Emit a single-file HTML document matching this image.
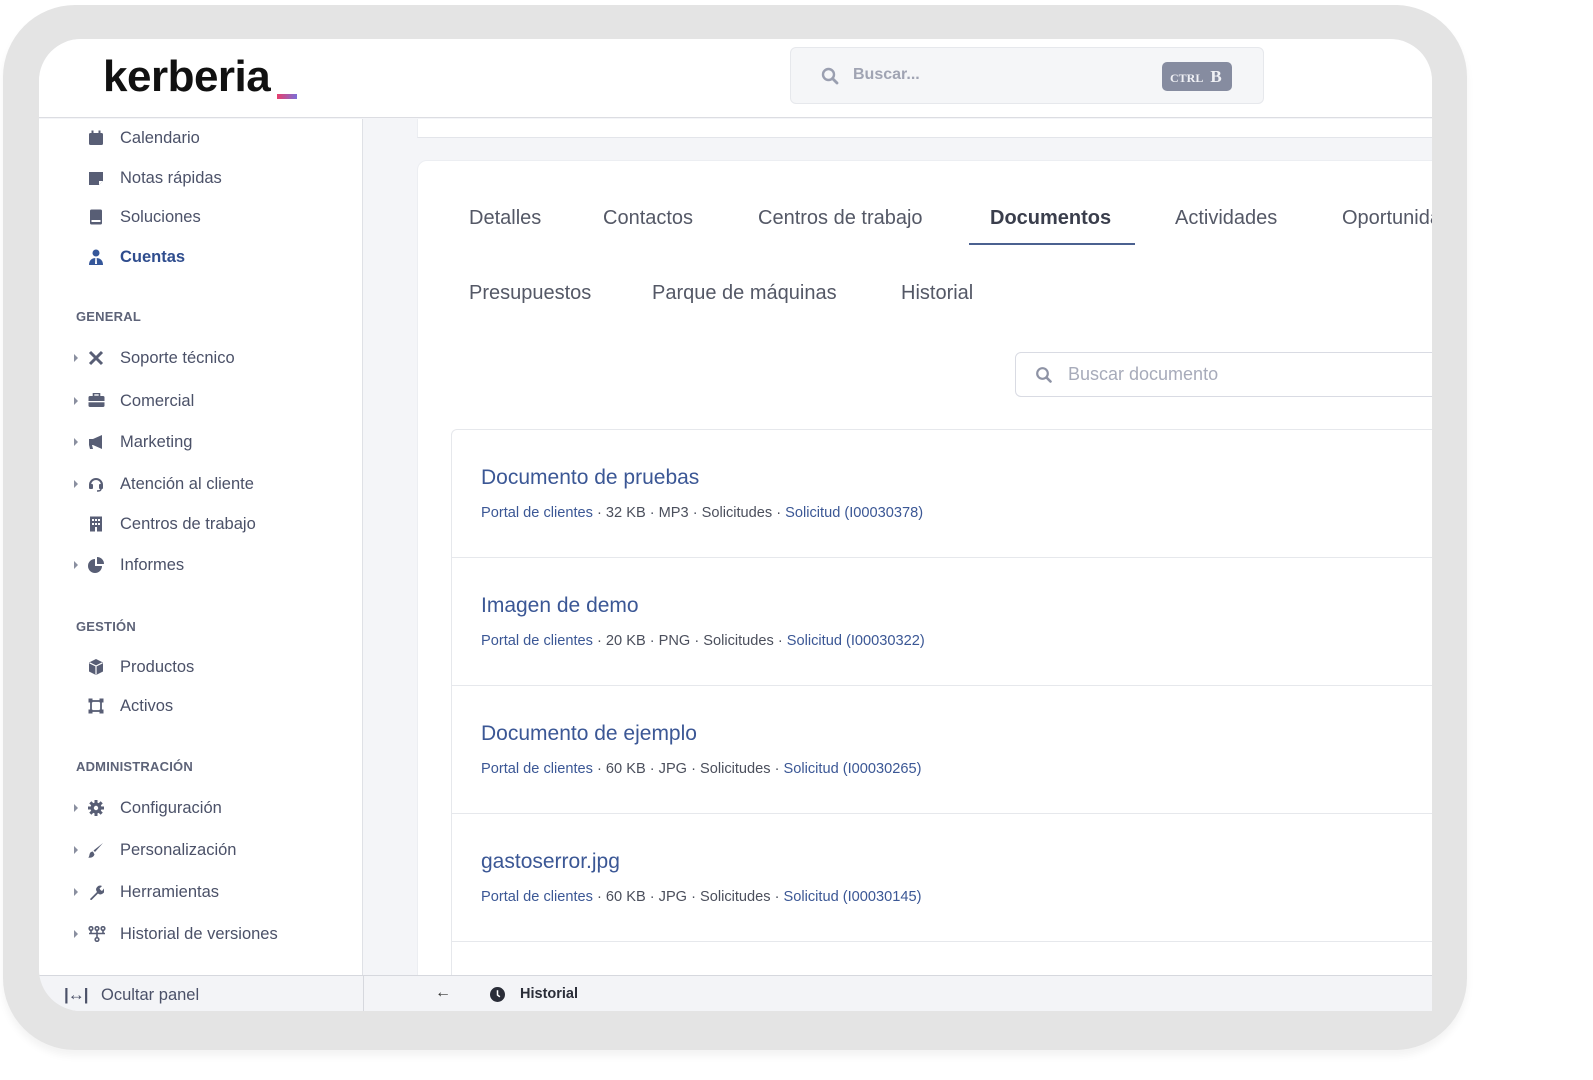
<!DOCTYPE html>
<html><head><meta charset="utf-8"><style>
*{margin:0;padding:0;box-sizing:border-box}
body{width:1593px;height:1080px;background:#fff;position:relative;overflow:hidden;font-family:"Liberation Sans",sans-serif}
.a{position:absolute}
.frame{left:3px;top:5px;width:1464px;height:1045px;background:#e4e4e4;border-radius:72px;box-shadow:0 6px 8px rgba(0,0,0,.05)}
.screen{left:39px;top:39px;width:1393px;height:972px;background:#f4f5f8;border-radius:42px 42px 0 42px;overflow:hidden}
.it{position:absolute;left:81px;height:22px;line-height:22px;font-size:16.5px;color:#4b5168;white-space:nowrap}
.it svg{position:absolute;left:-32px;top:3px}
.arr{position:absolute;left:-46px;top:7px;width:0;height:0;border-left:4px solid #8a8fa0;border-top:4px solid transparent;border-bottom:4px solid transparent}
.sec{position:absolute;left:37px;font-size:13px;font-weight:bold;color:#5d6378;letter-spacing:.2px}
.tab{position:absolute;font-size:20px;color:#545866;white-space:nowrap}
.row{position:absolute;left:0;right:0;height:128px;border-bottom:1px solid #e6e8ec}
.t{position:absolute;left:29px;top:36px;font-size:21px;color:#3b5795}
.m{position:absolute;left:29px;top:75px;font-size:14.6px;color:#4b4f5c;white-space:nowrap}
.m b{font-weight:normal;color:#3b5795}
</style></head><body>
<div class="a frame"></div>
<div class="a screen">
  <!-- header -->
  <div class="a" style="left:0;top:0;width:1393px;height:79px;background:#fff;border-bottom:1px solid #dcdde2"></div>
  <div class="a" style="left:64px;top:13px;font-size:44px;font-weight:bold;color:#111;letter-spacing:-0.5px">kerberia</div>
  <div class="a" style="left:238px;top:55px;width:20px;height:5px;background:linear-gradient(90deg,#e83e6c,#7b6fd8)"></div>
  <div class="a" style="left:751px;top:8px;width:474px;height:57px;background:#f5f6f8;border:1px solid #e6e8ec;border-radius:6px"></div>
  <svg class="a" style="left:782px;top:28px" width="18" height="18" viewBox="0 0 18 18"><circle cx="7.5" cy="7.5" r="5.5" fill="none" stroke="#9a9fb0" stroke-width="2.4"/><path d="M11.5 11.5L16 16" stroke="#9a9fb0" stroke-width="2.8" stroke-linecap="round"/></svg>
  <div class="a" style="left:814px;top:27px;font-size:16px;font-weight:bold;color:#a0a4b3">Buscar...</div>
  <div class="a" style="left:1123px;top:23px;width:70px;height:29px;background:#868ca0;border-radius:5px;color:#f0f1f5;font-family:'Liberation Serif',serif;font-weight:bold;line-height:29px;padding-left:8px"><span style="font-size:12px">CTRL</span> <span style="font-size:17px;margin-left:3px">B</span></div>
  <!-- sidebar -->
  <div class="a" style="left:0;top:80px;width:324px;height:856px;background:#fff;border-right:1px solid #dfe1e6"></div>
  <div class="it" style="top:88px"><svg width="16" height="16" viewBox="0 0 16 16"><rect x="1" y="3" width="14" height="12" rx="1.5" fill="#585e75"/><rect x="3.5" y="0.5" width="2" height="4" fill="#585e75"/><rect x="10.5" y="0.5" width="2" height="4" fill="#585e75"/></svg>Calendario</div>
  <div class="it" style="top:128px"><svg width="16" height="16" viewBox="0 0 16 16"><path d="M1 2h14v9l-4 4H1z" fill="#585e75"/><path d="M11 15v-4h4" fill="#fff"/></svg>Notas rápidas</div>
  <div class="it" style="top:167px"><svg width="16" height="16" viewBox="0 0 16 16"><rect x="2" y="0.5" width="12" height="15" rx="1.5" fill="#585e75"/><rect x="3.5" y="11" width="9" height="2" fill="#fff"/></svg>Soluciones</div>
  <div class="it" style="top:207px;color:#2f4d8e;font-weight:bold"><svg width="16" height="16" viewBox="0 0 16 16"><circle cx="8" cy="4" r="3.5" fill="#35579a"/><path d="M1 16c0-5 3-7 7-7s7 2 7 7z" fill="#35579a"/><path d="M7.3 9h1.4l.3 6h-2z" fill="#fff"/></svg>Cuentas</div>
  <div class="sec" style="top:270px">GENERAL</div>
  <div class="it" style="top:308px"><span class="arr"></span><svg width="16" height="16" viewBox="0 0 16 16"><path d="M2 2l12 12M14 2L2 14" stroke="#585e75" stroke-width="3"/></svg>Soporte técnico</div>
  <div class="it" style="top:351px"><span class="arr"></span><svg width="17" height="16" viewBox="0 0 17 16"><rect x="0.5" y="3" width="16" height="11" rx="1.5" fill="#585e75"/><rect x="5.5" y="0.5" width="6" height="3" fill="none" stroke="#585e75" stroke-width="1.6"/><rect x="0.5" y="8" width="16" height="1.3" fill="#fff"/></svg>Comercial</div>
  <div class="it" style="top:392px"><span class="arr"></span><svg width="16" height="16" viewBox="0 0 16 16"><path d="M1 5h4l9-4v14L5 11H4l1 4H2l-1-4z" fill="#585e75"/></svg>Marketing</div>
  <div class="it" style="top:434px"><span class="arr"></span><svg width="16" height="16" viewBox="0 0 16 16"><path d="M2 9a6 6 0 0112 0" fill="none" stroke="#585e75" stroke-width="2"/><rect x="1" y="8" width="4" height="5" rx="1" fill="#585e75"/><rect x="11" y="8" width="4" height="5" rx="1" fill="#585e75"/><path d="M13 13q0 2-4 2" fill="none" stroke="#585e75" stroke-width="1.5"/></svg>Atención al cliente</div>
  <div class="it" style="top:474px"><svg width="16" height="16" viewBox="0 0 16 16"><rect x="2" y="0.5" width="12" height="15" fill="#585e75"/><g fill="#fff"><rect x="4" y="3" width="2" height="2"/><rect x="7" y="3" width="2" height="2"/><rect x="10" y="3" width="2" height="2"/><rect x="4" y="7" width="2" height="2"/><rect x="7" y="7" width="2" height="2"/><rect x="10" y="7" width="2" height="2"/><rect x="7" y="11" width="2" height="5"/></g></svg>Centros de trabajo</div>
  <div class="it" style="top:515px"><span class="arr"></span><svg width="16" height="16" viewBox="0 0 16 16"><path d="M7 2a7 7 0 107 7H7z" fill="#585e75"/><path d="M9 0a7 7 0 017 7H9z" fill="#585e75"/></svg>Informes</div>
  <div class="sec" style="top:580px">GESTIÓN</div>
  <div class="it" style="top:617px"><svg width="16" height="16" viewBox="0 0 16 16"><path d="M8 0l7 3.5v9L8 16 1 12.5v-9z" fill="#585e75"/><path d="M1.5 3.8L8 7l6.5-3.2M8 7v8.5" stroke="#fff" stroke-width="1.2" fill="none"/></svg>Productos</div>
  <div class="it" style="top:656px"><svg width="16" height="16" viewBox="0 0 16 16"><rect x="3" y="3" width="10" height="10" fill="none" stroke="#585e75" stroke-width="1.8"/><g fill="#585e75"><rect x="0.5" y="0.5" width="4" height="4"/><rect x="11.5" y="0.5" width="4" height="4"/><rect x="0.5" y="11.5" width="4" height="4"/><rect x="11.5" y="11.5" width="4" height="4"/></g></svg>Activos</div>
  <div class="sec" style="top:720px">ADMINISTRACIÓN</div>
  <div class="it" style="top:758px"><span class="arr"></span><svg width="16" height="16" viewBox="0 0 16 16"><circle cx="8" cy="8" r="5.5" fill="#585e75"/><path d="M8 0v16M0 8h16M2.3 2.3l11.4 11.4M13.7 2.3L2.3 13.7" stroke="#585e75" stroke-width="3"/><circle cx="8" cy="8" r="2.2" fill="#fff"/></svg>Configuración</div>
  <div class="it" style="top:800px"><span class="arr"></span><svg width="16" height="16" viewBox="0 0 16 16"><path d="M15 1L7 10l-1.5-1.5z" fill="#585e75"/><path d="M5 9.5q-3 0-3.5 3T0 15.5q5 1 6.5-3z" fill="#585e75"/></svg>Personalización</div>
  <div class="it" style="top:842px"><span class="arr"></span><svg width="16" height="16" viewBox="0 0 16 16"><path d="M2 15l7-7a4 4 0 015-6l-2.5 2.5 1 1.5 1.5 1L16 4.5a4 4 0 01-6 5l-7 7z" fill="#585e75"/></svg>Herramientas</div>
  <div class="it" style="top:884px"><span class="arr"></span><svg width="18" height="16" viewBox="0 0 18 16"><g fill="none" stroke="#585e75" stroke-width="1.6"><circle cx="3" cy="2.5" r="1.8"/><circle cx="9" cy="2.5" r="1.8"/><circle cx="15" cy="2.5" r="1.8"/><circle cx="9" cy="13.5" r="1.8"/><path d="M3 4.5v3h12v-3M9 4.5v7M1 7.5h16"/></g></svg>Historial de versiones</div>
  <!-- main -->
  <div class="a" style="left:378px;top:80px;width:1020px;height:19px;background:#fff;border-bottom:1px solid #e3e5ea;border-left:1px solid #eceef2"></div>
  <div class="a" style="left:378px;top:121px;width:1020px;height:820px;background:#fff;border-radius:10px 0 0 0;border:1px solid #eceef2"></div>
  <div class="tab" style="left:430px;top:168px">Detalles</div>
  <div class="tab" style="left:564px;top:168px">Contactos</div>
  <div class="tab" style="left:719px;top:168px">Centros de trabajo</div>
  <div class="tab" style="left:951px;top:168px;font-weight:bold;color:#3a3e4c">Documentos</div>
  <div class="a" style="left:930px;top:204px;width:166px;height:2px;background:#4b6190"></div>
  <div class="tab" style="left:1136px;top:168px">Actividades</div>
  <div class="tab" style="left:1303px;top:168px">Oportunidades</div>
  <div class="tab" style="left:430px;top:243px">Presupuestos</div>
  <div class="tab" style="left:613px;top:243px">Parque de máquinas</div>
  <div class="tab" style="left:862px;top:243px">Historial</div>
  <div class="a" style="left:976px;top:313px;width:430px;height:45px;border:1px solid #d9dbe3;border-radius:6px;background:#fff"></div>
  <svg class="a" style="left:996px;top:327px" width="18" height="18" viewBox="0 0 18 18"><circle cx="7.5" cy="7.5" r="5.3" fill="none" stroke="#8e93a5" stroke-width="2.2"/><path d="M11.5 11.5L15.5 15.5" stroke="#8e93a5" stroke-width="2.6" stroke-linecap="round"/></svg>
  <div class="a" style="left:1029px;top:325px;font-size:18px;color:#a7abba">Buscar documento</div>
  <div class="a" style="left:412px;top:390px;width:990px;height:560px;border:1px solid #e6e8ec;border-radius:6px 0 0 0;background:#fff">
    <div class="row" style="top:0"><div class="t">Documento de pruebas</div><div class="m"><b>Portal de clientes</b> · 32 KB · MP3 · Solicitudes · <b>Solicitud (I00030378)</b></div></div>
    <div class="row" style="top:128px"><div class="t">Imagen de demo</div><div class="m"><b>Portal de clientes</b> · 20 KB · PNG · Solicitudes · <b>Solicitud (I00030322)</b></div></div>
    <div class="row" style="top:256px"><div class="t">Documento de ejemplo</div><div class="m"><b>Portal de clientes</b> · 60 KB · JPG · Solicitudes · <b>Solicitud (I00030265)</b></div></div>
    <div class="row" style="top:384px"><div class="t">gastoserror.jpg</div><div class="m"><b>Portal de clientes</b> · 60 KB · JPG · Solicitudes · <b>Solicitud (I00030145)</b></div></div>
  </div>
  <!-- bottom bar -->
  <div class="a" style="left:0;top:936px;width:1393px;height:36px;background:#f3f4f7;border-top:1px solid #d6d8de"></div>
  <div class="a" style="left:324px;top:936px;width:1px;height:36px;background:#d6d8de"></div>
  <div class="a" style="left:25px;top:946px;font-size:17px;font-weight:bold;color:#4b5168;letter-spacing:-1px">|↔|</div>
  <div class="a" style="left:62px;top:947px;font-size:16.5px;color:#4b5168">Ocultar panel</div>
  <div class="a" style="left:396px;top:945px;font-size:16px;color:#333">←</div>
  <svg class="a" style="left:451px;top:948px" width="15" height="15" viewBox="0 0 16 16"><circle cx="8" cy="8" r="8" fill="#2a2d38"/><path d="M8 3.5V8.5l2.5 2" stroke="#fff" stroke-width="1.6" fill="none"/></svg>
  <div class="a" style="left:481px;top:947px;font-size:14.5px;font-weight:bold;color:#2a2d38">Historial</div>
</div>
</body></html>
